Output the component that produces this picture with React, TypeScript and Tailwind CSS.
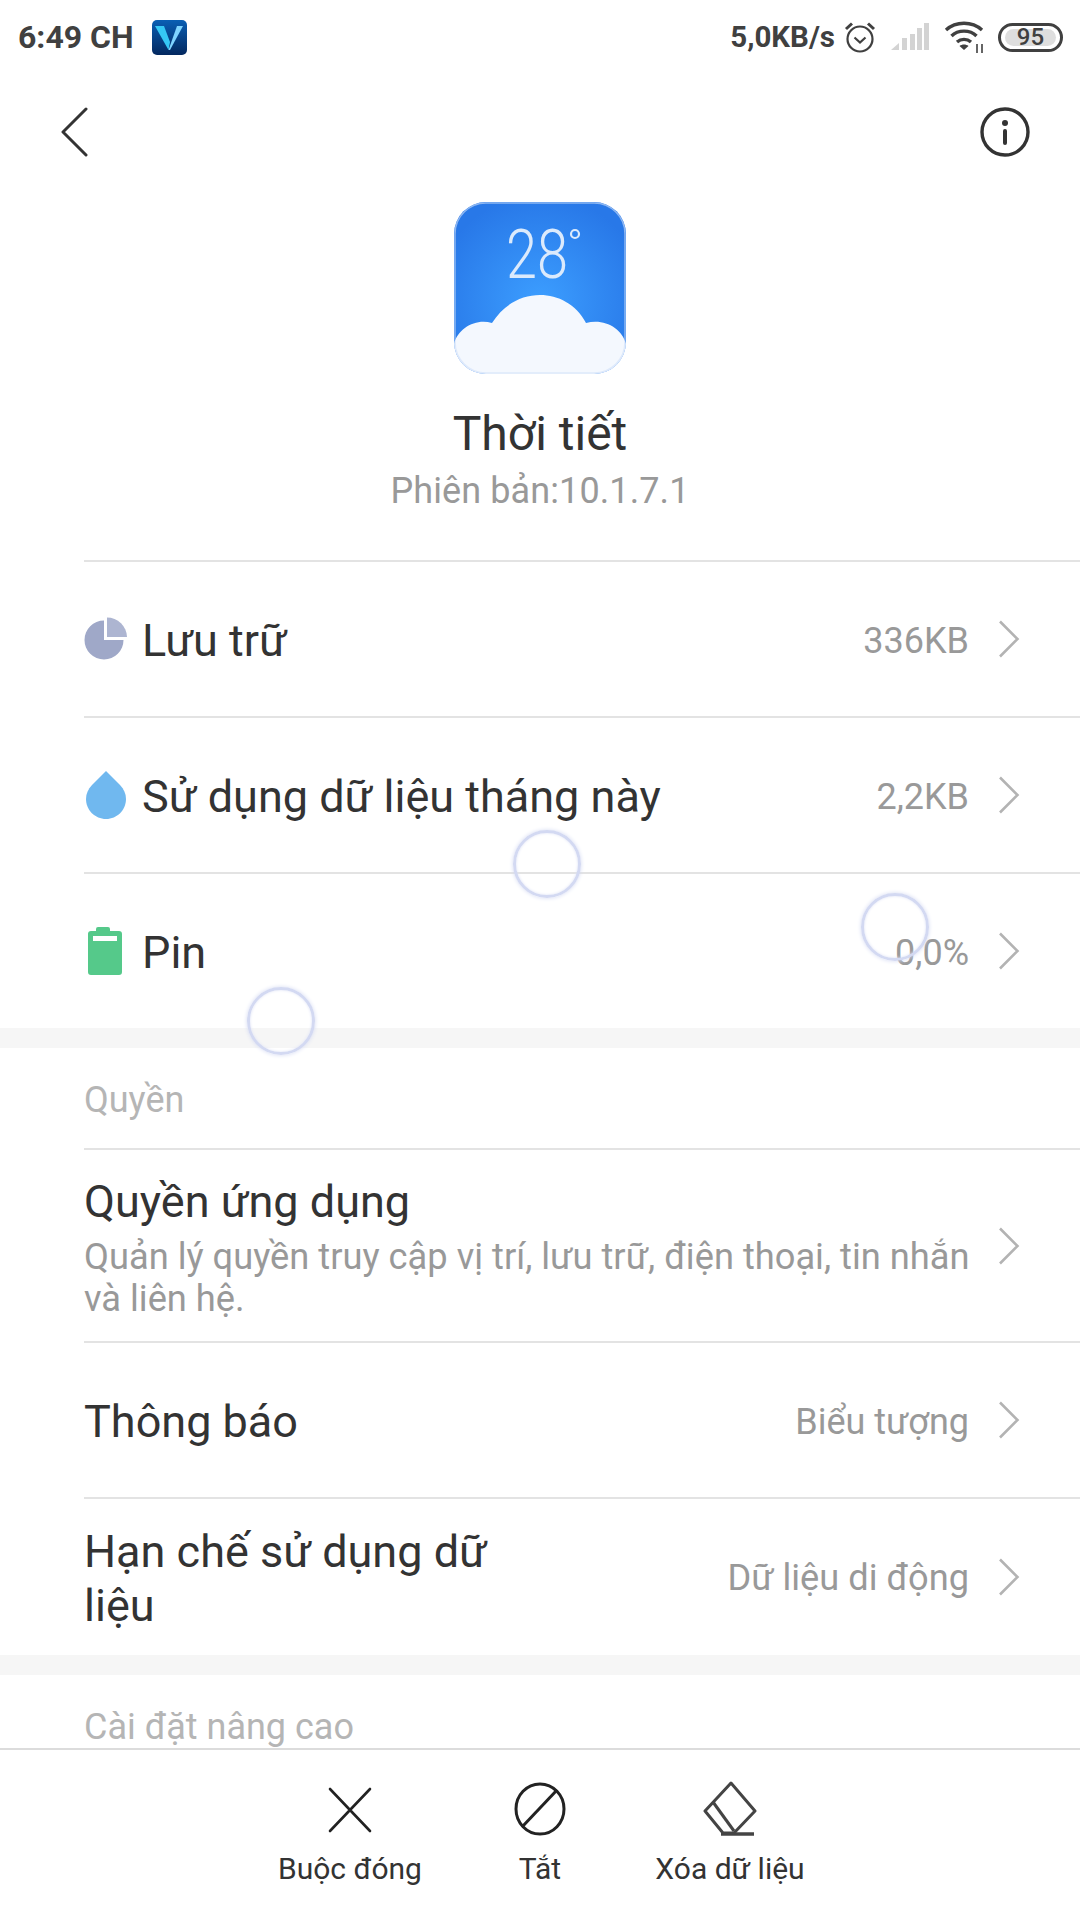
import { ReactNode } from 'react';

function Chevron() {
  return (
    <svg width="22" height="38" viewBox="0 0 22 38" fill="none" className="shrink-0">
      <path d="M2 1.5 L19.5 19 L2 36.5" stroke="#b3b3b3" strokeWidth="2.6" />
    </svg>
  );
}

function StatusBar() {
  return (
    <div className="h-[74px] shrink-0 flex items-center pl-[18px] pr-[17px] text-[#404040]">
      <span className="text-[32px] font-bold">6:49 CH</span>
      <svg width="35" height="35" viewBox="0 0 35 35" className="ml-[18px]">
        <defs>
          <linearGradient id="vbg" x1="0" y1="0" x2="0" y2="1">
            <stop offset="0" stopColor="#0a5fb4" />
            <stop offset="1" stopColor="#03285f" />
          </linearGradient>
        </defs>
        <rect width="35" height="35" rx="5" fill="url(#vbg)" />
        <path d="M3 6 H12 L18 22 L16.5 30 Z" fill="#35c8f5" />
        <path d="M31 6 H25 L16.5 30 L18 30 Z" fill="#7fd4ff" />
      </svg>
      <div className="flex-1" />
      <span className="text-[29.5px] font-bold">5,0KB/s</span>
      <svg width="34" height="34" viewBox="0 0 34 34" fill="none" stroke="#404040" className="ml-[8px]">
        <circle cx="17" cy="19" r="12.5" strokeWidth="2.2" />
        <path d="M11.5 17.5 L17 22.5 L22.5 17.5" strokeWidth="2.2" />
        <path d="M3 9 L9 3.5 M31 9 L25 3.5" strokeWidth="3" />
      </svg>
      <svg width="38" height="28" viewBox="0 0 38 28" className="ml-[14px]" fill="#d3d3d3">
        <path d="M0 27 L8 20 V27 Z" />
        <rect x="11" y="15" width="5" height="12" />
        <rect x="19" y="11" width="5" height="16" />
        <rect x="26" y="5" width="5" height="22" />
        <rect x="33" y="0" width="5" height="27" />
      </svg>
      <svg width="42" height="32" viewBox="0 0 42 32" fill="none" stroke="#404040" strokeWidth="3.4" className="ml-[15px]">
        <path d="M2 9 C12 0 28 0 38 9" />
        <path d="M7.5 15 C14 8.5 26 8.5 32.5 15" />
        <path d="M13 21 C17 17.5 23 17.5 27 21" />
        <path d="M20 29 L15.5 25 C18 23 22 23 24.5 25 Z" fill="#404040" stroke="none" />
        <path d="M33 23 V32 M38 23 V32" strokeWidth="1.6" />
      </svg>
      <div className="ml-[12px] w-[65px] h-[29px] rounded-full border-[3px] border-[#404040] relative flex items-center justify-center">
        <div className="absolute left-[4px] right-[4px] top-[3px] bottom-[3px] rounded-full bg-[#dedede]" />
        <span className="relative text-[24px] leading-none font-medium">95</span>
      </div>
    </div>
  );
}

function NavBar() {
  return (
    <div className="h-[116px] shrink-0 flex items-center justify-between pl-[61px] pr-[50px]">
      <svg width="28" height="50" viewBox="0 0 28 50" fill="none" stroke="#333333" strokeWidth="3" strokeLinecap="round" strokeLinejoin="round">
        <path d="M25 2 L2 25 L25 48" />
      </svg>
      <svg width="50" height="50" viewBox="0 0 50 50" fill="none" stroke="#333333">
        <circle cx="25" cy="25" r="23" strokeWidth="3.4" />
        <circle cx="25" cy="16" r="3" fill="#333333" stroke="none" />
        <path d="M25 24 V36" strokeWidth="4" strokeLinecap="round" />
      </svg>
    </div>
  );
}

function AppIcon() {
  return (
    <svg width="172" height="172" viewBox="0 0 172 172">
      <defs>
        <radialGradient id="sky" cx="0.5" cy="0.58" r="0.62">
          <stop offset="0" stopColor="#3c9eff" />
          <stop offset="1" stopColor="#2878e8" />
        </radialGradient>
        <clipPath id="squircle">
          <rect width="172" height="172" rx="32" />
        </clipPath>
      </defs>
      <g clipPath="url(#squircle)">
        <rect width="172" height="172" fill="url(#sky)" />
        <path
          d="M0 172 V142 C4 126 22 116 38 121 C50 102 68 93 86 93 C104 93 122 102 132 121 C150 116 168 126 172 142 V172 Z"
          fill="#f4f8fe"
        />
        <rect x="1" y="1" width="170" height="170" rx="31" fill="none" stroke="#cfe0f8" strokeWidth="1.5" strokeOpacity="0.6" />
      </g>
      <text
        x="52"
        y="76"
        fontFamily="Roboto, sans-serif"
        fontWeight="300"
        fontSize="69"
        fill="#dbeafc"
        textLength="62"
        lengthAdjust="spacingAndGlyphs"
      >
        28
      </text>
      <circle cx="121" cy="32" r="4" fill="none" stroke="#dbeafc" strokeWidth="2.2" />
    </svg>
  );
}

function Divider() {
  return <div className="h-[2px] ml-[84px] bg-[#e3e3e3] shrink-0" />;
}

function Gap() {
  return <div className="h-[20px] bg-[#f6f6f6] shrink-0" />;
}

function Row({ icon, label, value }: { icon?: ReactNode; label: string; value?: string }) {
  return (
    <div className="h-[154px] shrink-0 flex items-center pl-[84px] pr-[60px]">
      {icon}
      <span className="pt-[4px] text-[45px] leading-[54px] text-[#333333] whitespace-nowrap">{label}</span>
      <div className="flex-1" />
      {value && <span className="pt-[3px] text-[36px] text-[#999999] mr-[29px]">{value}</span>}
      <Chevron />
    </div>
  );
}

function SectionLabel({ children }: { children: ReactNode }) {
  return <div className="h-[100px] shrink-0 flex items-center pl-[84px] pt-[4px] text-[36px] text-[#b5b5b5] whitespace-nowrap">{children}</div>;
}

function Touch({ className }: { className: string }) {
  return <div className={`absolute w-[68px] h-[68px] rounded-full border-[3px] border-[#d3d9f2] shadow-[0_0_4px_#d3d9f2,inset_0_0_3px_#dfe3f6] ${className}`} />;
}

export default function App() {
  return (
    <div className="relative w-[1080px] h-[1920px] overflow-hidden bg-white flex flex-col font-['Roboto',sans-serif]">
      <StatusBar />
      <NavBar />

      <div className="flex flex-col items-center shrink-0 h-[370px] pt-[12px]">
        <AppIcon />
        <div className="mt-[32px] text-[48px] leading-[56px] text-[#333333]">Thời tiết</div>
        <div className="mt-[6px] text-[36px] leading-[46px] tracking-[0.1px] text-[#999999]">Phiên bản:10.1.7.1</div>
      </div>

      <Divider />
      <Row
        label="Lưu trữ"
        value="336KB"
        icon={
          <svg width="44" height="44" viewBox="0 0 44 44" className="mr-[14px] shrink-0">
            <path d="M20 3.5 A19.5 19.5 0 1 0 39.5 23 H20 Z" fill="#9fa8c8" />
            <path d="M23 0.5 A20 20 0 0 1 43 20 H23 Z" fill="#adb5d1" />
          </svg>
        }
      />
      <Divider />
      <Row
        label="Sử dụng dữ liệu tháng này"
        value="2,2KB"
        icon={
          <svg width="44" height="50" viewBox="0 0 44 50" className="mr-[14px] shrink-0">
            <path d="M22 1 L36 15 C40 19 42 24 42 29 C42 40 33 49 22 49 C11 49 2 40 2 29 C2 24 4 19 8 15 Z" fill="#70b8ef" />
          </svg>
        }
      />
      <Divider />
      <Row
        label="Pin"
        value="0,0%"
        icon={
          <svg width="44" height="48" viewBox="0 0 44 48" className="mr-[14px] shrink-0">
            <path d="M12 4 V2 Q12 0 14 0 H24 Q26 0 26 2 V4 H35 Q38 4 38 7 V45 Q38 48 35 48 H7 Q4 48 4 45 V7 Q4 4 7 4 Z" fill="#55c98a" />
            <rect x="9" y="9" width="24" height="5" fill="#ffffff" />
          </svg>
        }
      />
      <Gap />

      <SectionLabel>Quyền</SectionLabel>
      <Divider />
      <div className="h-[191px] shrink-0 flex items-center pl-[84px] pr-[60px]">
        <div className="flex-1 mr-[24px] pt-[4px]">
          <div className="text-[45px] leading-[52px] text-[#333333]">Quyền ứng dụng</div>
          <div className="mt-[8px] text-[36.25px] leading-[42px] text-[#999999]">
            Quản lý quyền truy cập vị trí, lưu trữ, điện thoại, tin nhắn và liên hệ.
          </div>
        </div>
        <Chevron />
      </div>
      <Divider />
      <Row label="Thông báo" value="Biểu tượng" />
      <Divider />
      <div className="h-[156px] shrink-0 flex items-center pl-[84px] pr-[60px]">
        <span className="pt-[4px] w-[430px] text-[45px] leading-[54px] text-[#333333]">Hạn chế sử dụng dữ liệu</span>
        <div className="flex-1" />
        <span className="pt-[3px] text-[36.2px] text-[#999999] mr-[29px]">Dữ liệu di động</span>
        <Chevron />
      </div>
      <Gap />
      <SectionLabel>Cài đặt nâng cao</SectionLabel>

      <div className="absolute left-0 right-0 bottom-0 h-[172px] bg-white">
        <div className="h-[2px] bg-[#dcdcdc]" />
        <div className="flex justify-center pt-[31px] text-[30px] text-[#333333] leading-[40px]">
          <div className="w-[190px] flex flex-col items-center">
            <svg width="44" height="46" viewBox="0 0 44 46" fill="none" stroke="#222222" strokeWidth="2.6" strokeLinecap="round" className="mt-[6px]">
              <path d="M2 2 L42 44 M42 2 L2 44" />
            </svg>
            <span className="mt-[16px] whitespace-nowrap">Buộc đóng</span>
          </div>
          <div className="w-[190px] flex flex-col items-center">
            <svg width="54" height="56" viewBox="0 0 54 56" fill="none" stroke="#222222" strokeWidth="3">
              <ellipse cx="27" cy="28" rx="24" ry="25" />
              <path d="M9 46 L44 9" />
            </svg>
            <span className="mt-[12px]">Tắt</span>
          </div>
          <div className="w-[190px] flex flex-col items-center">
            <svg width="54" height="56" viewBox="0 0 54 56" fill="none" stroke="#444444" strokeWidth="3" strokeLinejoin="round">
              <path d="M28 2 L52 30 L31 52 H20 L2 30 Z" />
              <path d="M10 21 L31 50" />
              <path d="M18 53 H51" strokeWidth="3.4" />
            </svg>
            <span className="mt-[12px] whitespace-nowrap">Xóa dữ liệu</span>
          </div>
        </div>
      </div>

      <Touch className="left-[513px] top-[830px]" />
      <Touch className="left-[861px] top-[893px]" />
      <Touch className="left-[247px] top-[987px]" />
    </div>
  );
}
